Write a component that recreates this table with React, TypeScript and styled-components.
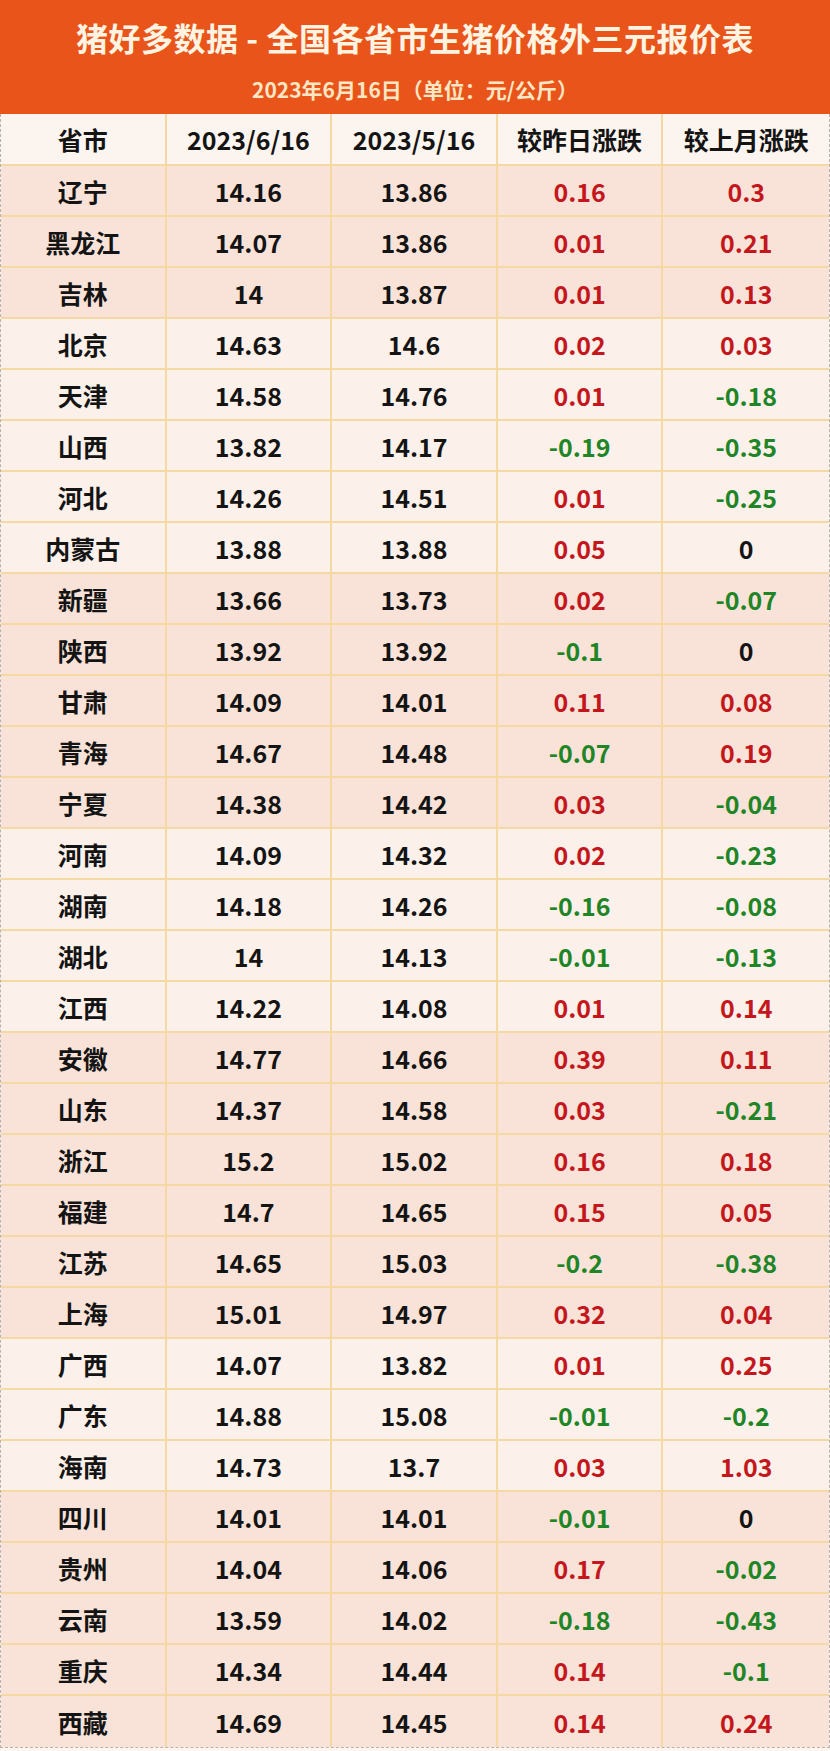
import { createGlobalStyle, styled } from 'styled-components';

type Row = [string, string, string, string, string, 'p' | 'l'];

const rows: Row[] = [
    ['辽宁', '14.16', '13.86', '0.16', '0.3', 'p'],
    ['黑龙江', '14.07', '13.86', '0.01', '0.21', 'p'],
    ['吉林', '14', '13.87', '0.01', '0.13', 'p'],
    ['北京', '14.63', '14.6', '0.02', '0.03', 'l'],
    ['天津', '14.58', '14.76', '0.01', '-0.18', 'l'],
    ['山西', '13.82', '14.17', '-0.19', '-0.35', 'l'],
    ['河北', '14.26', '14.51', '0.01', '-0.25', 'l'],
    ['内蒙古', '13.88', '13.88', '0.05', '0', 'l'],
    ['新疆', '13.66', '13.73', '0.02', '-0.07', 'p'],
    ['陕西', '13.92', '13.92', '-0.1', '0', 'p'],
    ['甘肃', '14.09', '14.01', '0.11', '0.08', 'p'],
    ['青海', '14.67', '14.48', '-0.07', '0.19', 'p'],
    ['宁夏', '14.38', '14.42', '0.03', '-0.04', 'p'],
    ['河南', '14.09', '14.32', '0.02', '-0.23', 'l'],
    ['湖南', '14.18', '14.26', '-0.16', '-0.08', 'l'],
    ['湖北', '14', '14.13', '-0.01', '-0.13', 'l'],
    ['江西', '14.22', '14.08', '0.01', '0.14', 'l'],
    ['安徽', '14.77', '14.66', '0.39', '0.11', 'p'],
    ['山东', '14.37', '14.58', '0.03', '-0.21', 'p'],
    ['浙江', '15.2', '15.02', '0.16', '0.18', 'p'],
    ['福建', '14.7', '14.65', '0.15', '0.05', 'p'],
    ['江苏', '14.65', '15.03', '-0.2', '-0.38', 'p'],
    ['上海', '15.01', '14.97', '0.32', '0.04', 'p'],
    ['广西', '14.07', '13.82', '0.01', '0.25', 'l'],
    ['广东', '14.88', '15.08', '-0.01', '-0.2', 'l'],
    ['海南', '14.73', '13.7', '0.03', '1.03', 'l'],
    ['四川', '14.01', '14.01', '-0.01', '0', 'p'],
    ['贵州', '14.04', '14.06', '0.17', '-0.02', 'p'],
    ['云南', '13.59', '14.02', '-0.18', '-0.43', 'p'],
    ['重庆', '14.34', '14.44', '0.14', '-0.1', 'p'],
    ['西藏', '14.69', '14.45', '0.14', '0.24', 'p'],
];

function trend(v: string): 'up' | 'down' | 'flat' {
    const n = parseFloat(v);
    if (n > 0) return 'up';
    if (n < 0) return 'down';
    return 'flat';
}

export default function App() {
    return (
        <>
            <GlobalStyle />
            <Page>
                <Banner>
                    <Title>猪好多数据 - 全国各省市生猪价格外三元报价表</Title>
                    <Subtitle>2023年6月16日（单位：元/公斤）</Subtitle>
                </Banner>

                <Table>
                    <HeadRow>
                        <Cell>省市</Cell>
                        <Cell>2023/6/16</Cell>
                        <Cell>2023/5/16</Cell>
                        <Cell>较昨日涨跌</Cell>
                        <Cell>较上月涨跌</Cell>
                    </HeadRow>
                    {rows.map(([name, today, lastMonth, dayDiff, monthDiff, tone]) => (
                        <BodyRow key={name} $tone={tone}>
                            <Cell>{name}</Cell>
                            <Cell>{today}</Cell>
                            <Cell>{lastMonth}</Cell>
                            <Cell $trend={trend(dayDiff)}>{dayDiff}</Cell>
                            <Cell $trend={trend(monthDiff)}>{monthDiff}</Cell>
                        </BodyRow>
                    ))}
                </Table>
            </Page>
        </>
    );
}

const GlobalStyle = createGlobalStyle`
    body {
        margin: 0;
        background: #fdf6f0;
        font-family: 'Noto Sans CJK SC', 'Noto Sans', sans-serif;
    }
`;

const Page = styled.div`
    width: 830px;
`;

const Banner = styled.div`
    height: 114px;
    box-sizing: border-box;
    padding-top: 15px;
    background: #e8541a;
    display: flex;
    flex-direction: column;
    align-items: center;
`;

const Title = styled.div`
    color: #fff4e2;
    font-size: 32px;
    font-weight: 700;
    line-height: 44px;
    letter-spacing: 0.5px;
`;

const Subtitle = styled.div`
    margin-top: 16px;
    color: #fde6c4;
    font-size: 21px;
    font-weight: 700;
    line-height: 28px;
`;

const Table = styled.div`
    border-left: 1px dashed #b9b1aa;
    border-right: 1px dashed #b9b1aa;
    border-bottom: 1px dashed #b9b1aa;
`;

const HeadRow = styled.div`
    display: grid;
    grid-template-columns: repeat(5, 1fr);
    height: 52px;
    background: #fcf5ef;
    border-bottom: 2px solid #f4d9a2;
    box-sizing: border-box;
`;

const BodyRow = styled.div<{ $tone: 'p' | 'l' }>`
    display: grid;
    grid-template-columns: repeat(5, 1fr);
    height: 51px;
    background: ${(p) => (p.$tone === 'p' ? '#f9e3d8' : '#fcf1ea')};
    border-bottom: 2px solid #f4d9a2;
    box-sizing: border-box;

    &:last-child {
        border-bottom: none;
    }
`;

const Cell = styled.div<{ $trend?: 'up' | 'down' | 'flat' }>`
    display: flex;
    align-items: center;
    justify-content: center;
    font-size: 25px;
    font-weight: 700;
    color: ${(p) => (p.$trend === 'up' ? '#c4171d' : p.$trend === 'down' ? '#1f8526' : '#141414')};
    border-right: 2px solid #f4d9a2;

    &:last-child {
        border-right: none;
    }
`;
